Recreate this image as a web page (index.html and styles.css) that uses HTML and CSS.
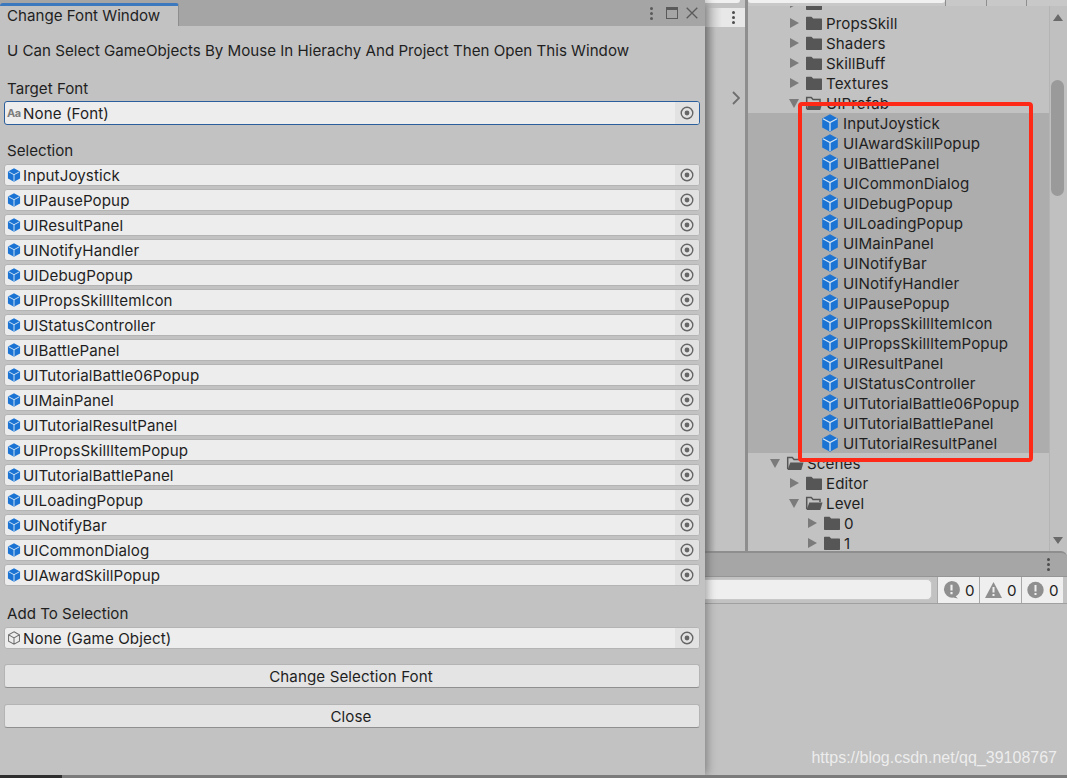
FILE: index.html
```html
<!DOCTYPE html>
<html lang="en">
<head>
<meta charset="utf-8">
<title>Change Font Window</title>
<link rel="stylesheet" href="styles.css">
</head>
<body>
<svg class="defs" width="0" height="0" aria-hidden="true">
  <symbol id="cube" viewBox="0 0 18 18">
    <path fill="#1b74d4" d="M9 0.3 16.8 4.4V13.6L9 17.7 1.2 13.6V4.4Z"/>
    <path fill="none" stroke="#d6e6f5" stroke-width="1.2" d="M2 4.8 9 8.6 16 4.8M9 8.6V17"/>
  </symbol>
  <symbol id="cube-empty" viewBox="0 0 18 18">
    <path fill="none" stroke="#6e6e6e" stroke-width="1.3" d="M9 1 16 4.800V13.200L9 17 2 13.200V4.800ZM2.300 5 9 9 15.700 5M9 9V16.700"/>
  </symbol>
  <symbol id="folder" viewBox="0 0 18 15">
    <path fill="#565656" d="M1 1.500Q1 .8 1.700 .8H6.500L8.200 2.600H16.300Q17 2.600 17 3.300V13.300Q17 14 16.300 14H1.700Q1 14 1 13.300Z"/>
  </symbol>
  <symbol id="folder-open" viewBox="0 0 18 15">
    <path fill="none" stroke="#565656" stroke-width="1.500" d="M1.700 13V1.600H6.300L8 3.400H15V6"/>
    <path fill="#565656" d="M1.500 14 4.300 6.500H17.500L15.300 14Z"/>
  </symbol>
  <symbol id="target" viewBox="0 0 14 14">
    <circle cx="7" cy="7" r="5.800" fill="none" stroke="#666" stroke-width="1.400"/>
    <circle cx="7" cy="7" r="2.400" fill="#666"/>
  </symbol>
</svg>

<div class="editor">
  <div class="top">
    <section class="scene">
      <div class="scene-search"></div>
      <div class="scene-tab"><span class="dots dots-dark"><i></i><i></i><i></i></span></div>
      <div class="scene-body"><svg class="chevron" viewBox="0 0 8 14"><path d="M1 1 7 7 1 13" fill="none" stroke="#6e6e6e" stroke-width="1.800"/></svg></div>
    </section>
    <section class="project">
      <div class="project-bar"><div class="project-search"></div><div class="project-tools"><b></b><b></b><b></b></div></div>
      <div class="project-main">
        <div class="tree">
          <div class="row lvl2"><span class="arrow"></span><svg class="folder"><use href="#folder"/></svg></div>
          <div class="row lvl2"><span class="arrow"></span><svg class="folder"><use href="#folder"/></svg><span>PropsSkill</span></div>
          <div class="row lvl2"><span class="arrow"></span><svg class="folder"><use href="#folder"/></svg><span>Shaders</span></div>
          <div class="row lvl2"><span class="arrow"></span><svg class="folder"><use href="#folder"/></svg><span>SkillBuff</span></div>
          <div class="row lvl2"><span class="arrow"></span><svg class="folder"><use href="#folder"/></svg><span>Textures</span></div>
          <div class="row lvl2"><span class="arrow open"></span><svg class="folder"><use href="#folder-open"/></svg><span>UIPrefab</span></div>
          <div class="selected">
            <div class="row lvl3"><svg class="cube"><use href="#cube"/></svg><span>InputJoystick</span></div>
            <div class="row lvl3"><svg class="cube"><use href="#cube"/></svg><span>UIAwardSkillPopup</span></div>
            <div class="row lvl3"><svg class="cube"><use href="#cube"/></svg><span>UIBattlePanel</span></div>
            <div class="row lvl3"><svg class="cube"><use href="#cube"/></svg><span>UICommonDialog</span></div>
            <div class="row lvl3"><svg class="cube"><use href="#cube"/></svg><span>UIDebugPopup</span></div>
            <div class="row lvl3"><svg class="cube"><use href="#cube"/></svg><span>UILoadingPopup</span></div>
            <div class="row lvl3"><svg class="cube"><use href="#cube"/></svg><span>UIMainPanel</span></div>
            <div class="row lvl3"><svg class="cube"><use href="#cube"/></svg><span>UINotifyBar</span></div>
            <div class="row lvl3"><svg class="cube"><use href="#cube"/></svg><span>UINotifyHandler</span></div>
            <div class="row lvl3"><svg class="cube"><use href="#cube"/></svg><span>UIPausePopup</span></div>
            <div class="row lvl3"><svg class="cube"><use href="#cube"/></svg><span>UIPropsSkillItemIcon</span></div>
            <div class="row lvl3"><svg class="cube"><use href="#cube"/></svg><span>UIPropsSkillItemPopup</span></div>
            <div class="row lvl3"><svg class="cube"><use href="#cube"/></svg><span>UIResultPanel</span></div>
            <div class="row lvl3"><svg class="cube"><use href="#cube"/></svg><span>UIStatusController</span></div>
            <div class="row lvl3"><svg class="cube"><use href="#cube"/></svg><span>UITutorialBattle06Popup</span></div>
            <div class="row lvl3"><svg class="cube"><use href="#cube"/></svg><span>UITutorialBattlePanel</span></div>
            <div class="row lvl3"><svg class="cube"><use href="#cube"/></svg><span>UITutorialResultPanel</span></div>
          </div>
          <div class="row lvl1"><span class="arrow open"></span><svg class="folder"><use href="#folder-open"/></svg><span>Scenes</span></div>
          <div class="row lvl2"><span class="arrow"></span><svg class="folder"><use href="#folder"/></svg><span>Editor</span></div>
          <div class="row lvl2"><span class="arrow open"></span><svg class="folder"><use href="#folder-open"/></svg><span>Level</span></div>
          <div class="row lvl3b"><span class="arrow"></span><svg class="folder"><use href="#folder"/></svg><span>0</span></div>
          <div class="row lvl3b"><span class="arrow"></span><svg class="folder"><use href="#folder"/></svg><span>1</span></div>
        </div>
        <div class="scrollbar">
          <span class="sb-up"></span>
          <span class="sb-thumb"></span>
          <span class="sb-down"></span>
        </div>
      </div>
    </section>
  </div>
  <section class="console">
    <div class="console-tabs"><span class="dots dots-dark"><i></i><i></i><i></i></span></div>
    <div class="console-tools">
      <div class="console-search"></div>
      <div class="badge"><svg viewBox="1 1 16 17"><path fill="#8f8f8f" d="M9 1a7.800 7.800 0 0 1 4 14.500L15 17.500 10.500 16.700A7.800 7.800 0 1 1 9 1Z"/><path stroke="#efefef" stroke-width="2" d="M9 4.500V10M9 11.500V13.500"/></svg><span>0</span></div>
      <div class="badge"><svg viewBox="0.500 1 17 16"><path fill="#8f8f8f" d="M9 1 17.500 17H.5Z"/><path stroke="#efefef" stroke-width="2" d="M9 6V11.500M9 13V15"/></svg><span>0</span></div>
      <div class="badge"><svg viewBox="0.500 0.500 17 17"><circle cx="9" cy="9" r="8.200" fill="#8f8f8f"/><path stroke="#efefef" stroke-width="2" d="M9 4V10.500M9 12V14"/></svg><span>0</span></div>
    </div>
    <div class="console-log"></div>
  </section>
</div>

<div class="window">
  <div class="win-tabs">
    <div class="win-tab">Change Font Window</div>
    <div class="win-controls">
      <span class="dots"><i></i><i></i><i></i></span>
      <span class="maximize"></span>
      <svg class="close" viewBox="0 0 12 12"><path d="M.7.7 11.300 11.300M11.300.7.7 11.300" fill="none" stroke="#5a5a5a" stroke-width="1.300"/></svg>
    </div>
  </div>
  <div class="win-body">
    <p class="intro">U Can Select GameObjects By Mouse In Hierachy And Project Then Open This Window</p>
    <h2 class="label label-target">Target Font</h2>
    <div class="field focus"><span class="aa">Aa</span><span class="name">None (Font)</span><span class="pick"><svg><use href="#target"/></svg></span></div>
    <h2 class="label label-selection">Selection</h2>
    <div class="list">
      <div class="field"><svg class="ficon"><use href="#cube"/></svg><span class="name">InputJoystick</span><span class="pick"><svg><use href="#target"/></svg></span></div>
      <div class="field"><svg class="ficon"><use href="#cube"/></svg><span class="name">UIPausePopup</span><span class="pick"><svg><use href="#target"/></svg></span></div>
      <div class="field"><svg class="ficon"><use href="#cube"/></svg><span class="name">UIResultPanel</span><span class="pick"><svg><use href="#target"/></svg></span></div>
      <div class="field"><svg class="ficon"><use href="#cube"/></svg><span class="name">UINotifyHandler</span><span class="pick"><svg><use href="#target"/></svg></span></div>
      <div class="field"><svg class="ficon"><use href="#cube"/></svg><span class="name">UIDebugPopup</span><span class="pick"><svg><use href="#target"/></svg></span></div>
      <div class="field"><svg class="ficon"><use href="#cube"/></svg><span class="name">UIPropsSkillItemIcon</span><span class="pick"><svg><use href="#target"/></svg></span></div>
      <div class="field"><svg class="ficon"><use href="#cube"/></svg><span class="name">UIStatusController</span><span class="pick"><svg><use href="#target"/></svg></span></div>
      <div class="field"><svg class="ficon"><use href="#cube"/></svg><span class="name">UIBattlePanel</span><span class="pick"><svg><use href="#target"/></svg></span></div>
      <div class="field"><svg class="ficon"><use href="#cube"/></svg><span class="name">UITutorialBattle06Popup</span><span class="pick"><svg><use href="#target"/></svg></span></div>
      <div class="field"><svg class="ficon"><use href="#cube"/></svg><span class="name">UIMainPanel</span><span class="pick"><svg><use href="#target"/></svg></span></div>
      <div class="field"><svg class="ficon"><use href="#cube"/></svg><span class="name">UITutorialResultPanel</span><span class="pick"><svg><use href="#target"/></svg></span></div>
      <div class="field"><svg class="ficon"><use href="#cube"/></svg><span class="name">UIPropsSkillItemPopup</span><span class="pick"><svg><use href="#target"/></svg></span></div>
      <div class="field"><svg class="ficon"><use href="#cube"/></svg><span class="name">UITutorialBattlePanel</span><span class="pick"><svg><use href="#target"/></svg></span></div>
      <div class="field"><svg class="ficon"><use href="#cube"/></svg><span class="name">UILoadingPopup</span><span class="pick"><svg><use href="#target"/></svg></span></div>
      <div class="field"><svg class="ficon"><use href="#cube"/></svg><span class="name">UINotifyBar</span><span class="pick"><svg><use href="#target"/></svg></span></div>
      <div class="field"><svg class="ficon"><use href="#cube"/></svg><span class="name">UICommonDialog</span><span class="pick"><svg><use href="#target"/></svg></span></div>
      <div class="field"><svg class="ficon"><use href="#cube"/></svg><span class="name">UIAwardSkillPopup</span><span class="pick"><svg><use href="#target"/></svg></span></div>
    </div>
    <h2 class="label label-add">Add To Selection</h2>
    <div class="field"><svg class="ficon"><use href="#cube-empty"/></svg><span class="name">None (Game Object)</span><span class="pick"><svg><use href="#target"/></svg></span></div>
    <button class="btn btn-first" type="button">Change Selection Font</button>
    <button class="btn" type="button">Close</button>
  </div>
</div>

<div class="annotation"></div>
<div class="watermark">https://blog.csdn.net/qq_39108767</div>
<div class="taskbar"><span></span></div>
</body>
</html>
```
FILE: styles.css
```css
* { box-sizing: border-box; }
html, body { margin: 0; height: 100%; }
body {
  position: relative;
  width: 1067px;
  height: 778px;
  overflow: hidden;
  background: #c2c2c2;
  font-family: Inter, "Liberation Sans", sans-serif;
  font-size: 15.13px;
  color: #1f1f1f;
}
.defs { position: absolute; }

/* Editor behind the floating window */
.editor { display: flex; flex-direction: column; height: 100%; }
.top { display: flex; height: 551px; flex: none; }
.scene { width: 745px; flex: none; display: flex; flex-direction: column; background: #c2c2c2; }
.scene-search { height: 3px; margin: 0 5px 5px 0; background: #f0f0f0; border-radius: 0 0 4px 4px; flex: none; }
.scene-tab { height: 19px; flex: none; background: linear-gradient(90deg, #bdbdbd 705px, #e8e8e8 722px); display: flex; justify-content: flex-end; align-items: center; padding-right: 10px; }
.scene-body { flex: 1; display: flex; justify-content: flex-end; padding: 64px 5px 0 0; background: linear-gradient(90deg, #9c9c9c 705px, #c2c2c2 716px); }
.chevron { width: 8px; height: 14px; }
.dots { display: inline-flex; flex-direction: column; gap: 2px; }
.dots i { width: 3px; height: 3px; border-radius: 50%; background: #5a5a5a; }
.dots-dark i { background: #4d4d4d; }

.project { flex: 1; border-left: 3px solid #8e8e8e; display: flex; flex-direction: column; min-width: 0; }
.project-bar { height: 6px; flex: none; background: #c8c8c8; display: flex; overflow: hidden; position: relative; z-index: 1; }
.project-search { width: 197px; height: 3px; background: #f0f0f0; border-radius: 0 0 5px 5px; }
.project-tools { flex: 1; display: flex; }
.project-tools b { flex: 1; border-left: 1px solid #8e8e8e; height: 6px; }
.project-main { flex: 1; display: flex; min-height: 0; }
.tree { flex: 1; overflow: hidden; min-width: 0; }
.tree > .row:first-child { margin-top: -13px; }
.row { height: 20px; display: flex; align-items: center; white-space: nowrap; letter-spacing: .1px; }
.lvl1 { padding-left: 23px; }
.lvl2 { padding-left: 42px; }
.lvl3 { padding-left: 73px; }
.lvl3b { padding-left: 60px; }
.arrow { width: 0; height: 0; margin-right: 6px; border-style: solid; border-width: 5.500px 0 5.500px 9px; border-color: transparent transparent transparent #7b7b7b; flex: none; }
.arrow.open { border-width: 9px 5.500px 0 5.500px; border-color: #7b7b7b transparent transparent; margin-right: 6px; margin-left: -1px; }
.folder { width: 18px; height: 15px; margin-right: 3px; flex: none; }
.cube { width: 18px; height: 18px; margin-right: 4px; flex: none; }
.selected { background: #adadad; height: 340px; }

.scrollbar { width: 18px; flex: none; background: #c0c0c0; border-left: 1px solid #b4b4b4; display: flex; flex-direction: column; align-items: center; padding-top: 8px; }
.sb-up { width: 0; height: 0; border-style: solid; border-width: 0 5px 7px; border-color: transparent transparent #6a6a6a; flex: none; margin-right: 2px; }
.sb-thumb { width: 13px; height: 116px; margin: 59px 2px 0 0; background: #9a9a9a; border-radius: 7px; flex: none; }
.sb-down { width: 0; height: 0; border-style: solid; border-width: 7px 5px 0; border-color: #6a6a6a transparent transparent; flex: none; margin: auto 2px 7px 0; }

.console { flex: 1; display: flex; flex-direction: column; min-height: 0; }
.console-tabs { height: 26px; flex: none; background: #a6a6a6; border-top: 2px solid #8e8e8e; border-bottom: 1px solid #959595; border-radius: 0 6px 0 0; display: flex; justify-content: flex-end; align-items: center; padding-right: 17px; }
.console-tools { height: 27px; flex: none; display: flex; background: #c2c2c2; border-bottom: 1px solid #a0a0a0; }
.console-search { width: 932px; margin: 2px 5px 3px 0; background: #efefef; border: 1px solid #c8c8c8; border-radius: 0 5px 5px 0; }
.badge { width: 42px; display: flex; align-items: center; gap: 5px; padding-left: 5px; background: #efefef; border-left: 1px solid #a8a8a8; }
.badge:last-child { margin-right: 4px; }
.badge svg { width: 17px; height: 18px; flex: none; }
.console-log { flex: 1; background: #c2c2c2; }

/* Floating window */
.window {
  position: absolute;
  left: 0;
  top: 0;
  width: 705px;
  height: 775px;
  background: #c2c2c2;
  box-shadow: 2px 0 9px rgba(0, 0, 0, .35);
  display: flex;
  flex-direction: column;
}
.win-tabs { height: 26px; flex: none; display: flex; justify-content: space-between; align-items: flex-end; background: #a5a5a5; }
.win-tab { width: 179px; height: 23px; background: #c2c2c2; border-top: 3px solid #3c78bd; border-right: 1px solid #8e8e8e; border-radius: 3px 3px 0 0; padding-left: 7px; line-height: 20px; white-space: nowrap; }
.win-controls { align-self: stretch; display: flex; align-items: center; padding-right: 7px; }
.maximize { width: 12px; height: 12px; margin: 0 8px 0 13px; border: 1px solid #5a5a5a; border-top-width: 3px; }
.close { width: 12px; height: 12px; }
.win-body { flex: 1; padding: 0 5px 0 4px; min-height: 0; }
.intro { margin: 16px 0 0 3px; height: 18px; line-height: 18px; white-space: nowrap; }
.label { margin: 0 0 0 3px; height: 18px; line-height: 18px; font-size: inherit; font-weight: 400; }
.label-target { margin-top: 20px; margin-bottom: 3px; }
.label-selection { margin-top: 17px; margin-bottom: 4px; }
.label-add { margin-top: 19px; margin-bottom: 4px; }
.list { display: flex; flex-direction: column; gap: 3px; }
.field { height: 22px; display: flex; align-items: center; background: #ededed; border: 1px solid #b4b4b4; border-radius: 3px; overflow: hidden; }
.field.focus { height: 24px; border: 1px solid #2b5f9b; }
.ficon { width: 14px; height: 14px; margin: 0 2px; flex: none; }
.aa { width: 14px; margin: 0 2px; font-size: 11px; font-weight: 700; letter-spacing: -.5px; color: #7d7d7d; flex: none; }
.name { flex: 1; white-space: nowrap; letter-spacing: .1px; }
.pick { width: 24px; align-self: stretch; flex: none; background: #e2e2e2; display: flex; align-items: center; justify-content: center; }
.pick svg { width: 14px; height: 14px; }
.btn { display: block; width: 100%; height: 24px; margin-top: 16px; padding: 0 2px 0 0; background: #e4e4e4; border: 1px solid #b4b4b4; border-bottom-color: #8f8f8f; border-radius: 3px; font: inherit; letter-spacing: .1px; color: #1f1f1f; }
.btn-first { margin-top: 15px; }

/* Overlays */
.annotation { position: absolute; left: 798px; top: 102px; width: 235px; height: 360px; border: 4px solid #fe2a17; border-radius: 4px; }
.watermark { position: absolute; right: 10px; top: 749px; font-family: "Liberation Sans", sans-serif; font-size: 16px; color: rgba(255, 255, 255, .72); white-space: nowrap; }
.taskbar { position: absolute; left: 0; right: 0; bottom: 0; height: 3px; background: #7b7b7b; }
.taskbar span { display: block; width: 62px; height: 100%; background: #2e2e2e; }
```
